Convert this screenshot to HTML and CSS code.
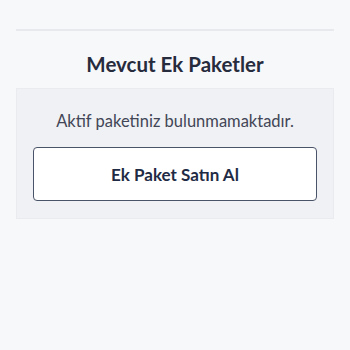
FILE: index.html
```html
<!DOCTYPE html>
<html lang="tr">
<head>
  <meta charset="UTF-8" />
  <meta name="viewport" content="width=device-width, initial-scale=1.0"/>
  <title>Ek Paketler</title>
  <link rel="stylesheet" href="styles.css">
</head>
<body>

  <div class="sayfa">
    <hr class="ayrac">

    <!-- Mevcut paketler -->
    <section class="paketler">
      <h2 class="baslik">Mevcut Ek Paketler</h2>
      <div class="kutu">
        <p class="bos-mesaj">Aktif paketiniz bulunmamaktadır.</p>
        <button class="satin-al">Ek Paket Satın Al</button>
      </div>
    </section>
  </div>

</body>
</html>
```

FILE: styles.css
```css
/* Genel */
body {
  font-family: Lato, "Open Sans", sans-serif;
  background-color: #f7f8fa;
  margin: 0;
  padding: 0;
}

.sayfa {
  padding: 29px 16px 0;
}

.ayrac {
  border: none;
  height: 2px;
  background: #e7e9ec;
  margin: 0;
}

/* Başlık */
.baslik {
  margin: 0;
  padding: 18px 0 0;
  height: 39px;
  line-height: 30px;
  text-align: center;
  font-size: 20.5px;
  font-weight: 700;
  color: #262b3d;
}

/* Kutu */
.kutu {
  background: #f0f1f4;
  border: 1px solid #e9ebee;
  box-shadow: 0 2px 0 #eceef1;
  padding: 19px 16px 17px;
  display: flex;
  flex-direction: column;
}

.bos-mesaj {
  margin: 0 0 13px;
  text-align: center;
  font-size: 16.5px;
  color: #424657;
  line-height: 26px;
}

.satin-al {
  height: 54px;
  background: #fff;
  border: 1.5px solid #4a5468;
  border-radius: 4px;
  font-family: inherit;
  font-size: 17px;
  font-weight: 700;
  color: #1f2b45;
  cursor: pointer;
}
```
